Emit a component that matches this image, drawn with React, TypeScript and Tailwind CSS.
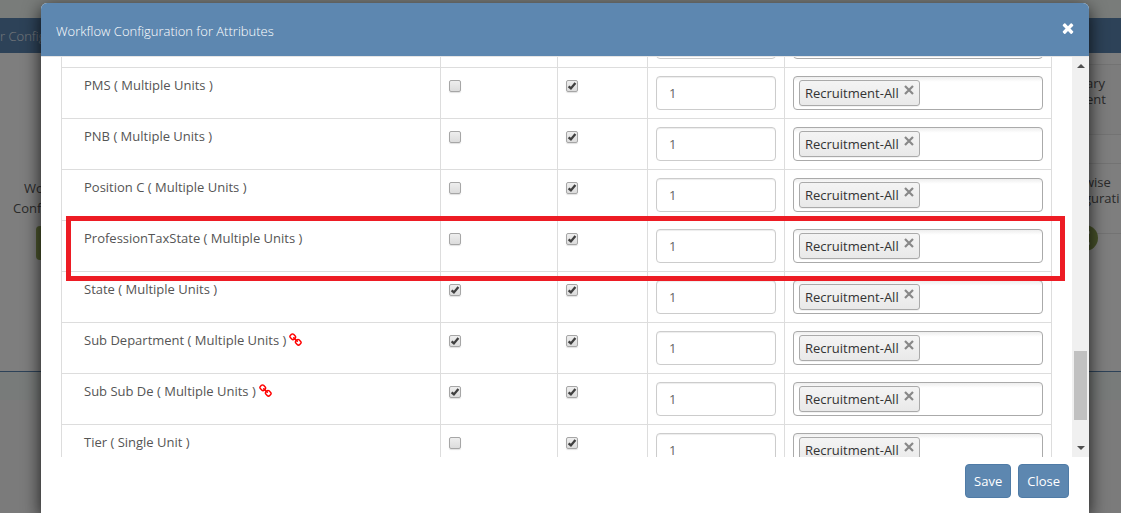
import { useState } from "react";

type Row = { name: string; first: boolean; second: boolean; linked?: boolean };

const rows: Row[] = [
  { name: "", first: false, second: true },
  { name: "PMS ( Multiple Units )", first: false, second: true },
  { name: "PNB ( Multiple Units )", first: false, second: true },
  { name: "Position C ( Multiple Units )", first: false, second: true },
  { name: "ProfessionTaxState ( Multiple Units )", first: false, second: true },
  { name: "State ( Multiple Units )", first: true, second: true },
  { name: "Sub Department ( Multiple Units )", first: true, second: true, linked: true },
  { name: "Sub Sub De ( Multiple Units )", first: true, second: true, linked: true },
  { name: "Tier ( Single Unit )", first: false, second: true },
];

function LinkIcon({ className }: { className: string }) {
  return (
    <svg viewBox="0 0 1792 1792" className={className} fill="currentColor" aria-hidden="true">
      <path d="M1456 1216q0-40-28-68l-208-208q-28-28-68-28-42 0-72 32 3 3 19 18.500t21.500 21.500 15 19 13 25.500 3.500 27.500q0 40-28 68t-68 28q-15 0-27.500-3.500t-25.500-13-19-15-21.500-21.500-18.500-19q-33 31-33 73 0 40 28 68l206 207q27 27 68 27 40 0 68-26l147-146q28-28 28-67zm-703-705q0-40-28-68l-206-207q-28-28-68-28-39 0-68 27l-147 146q-28 28-28 67 0 40 28 68l208 208q27 27 68 27 42 0 72-31-3-3-19-18.500t-21.500-21.500-15-19-13-25.500-3.500-27.500q0-40 28-68t68-28q15 0 27.500 3.500t25.500 13 19 15 21.500 21.500 18.500 19q33-31 33-73zm895 705q0 120-85 203l-147 146q-83 83-203 83-121 0-204-85l-206-207q-83-83-83-203 0-123 88-209l-88-88q-86 88-208 88-120 0-204-84l-208-208q-84-84-84-204t85-203l147-146q83-83 203-83 121 0 204 85l206 207q83 83 83 203 0 123-88 209l88 88q86-88 208-88 120 0 204 84l208 208q84 84 84 204z" />
    </svg>
  );
}

function TimesIcon({ className }: { className: string }) {
  return (
    <svg viewBox="0 0 1792 1792" className={className} fill="currentColor" aria-hidden="true">
      <path d="M1490 1322q0 40-28 68l-136 136q-28 28-68 28t-68-28l-294-294-294 294q-28 28-68 28t-68-28l-136-136q-28-28-28-68t28-68l294-294-294-294q-28-28-28-68t28-68l136-136q28-28 68-28t68 28l294 294 294-294q28-28 68-28t68 28l136 136q28 28 28 68t-28 68l-294 294 294 294q28 28 28 68z" />
    </svg>
  );
}

function Cross({ className }: { className: string }) {
  return (
    <svg viewBox="0 0 10 10" className={className} aria-hidden="true">
      <path d="M1 1 9 9M9 1 1 9" stroke="currentColor" strokeWidth="2.2" />
    </svg>
  );
}

function Tick({ on, label }: { on: boolean; label: string }) {
  const [checked, setChecked] = useState(on);
  return (
    <label className="relative block size-3">
      <input
        type="checkbox"
        aria-label={label}
        checked={checked}
        onChange={(e) => setChecked(e.target.checked)}
        className="block size-3 appearance-none rounded-xs border border-[#a6a6a6] bg-linear-to-b from-[#eeeeee] to-[#dcdcdc] shadow-[0_1px_1px_rgba(0,0,0,0.12)]"
      />
      {checked && (
        <svg viewBox="0 0 12 12" className="pointer-events-none absolute inset-0 size-3" aria-hidden="true">
          <path d="M2.600 6.300 4.900 8.400 9.400 2.900" fill="none" stroke="#404040" strokeWidth="2.300" />
        </svg>
      )}
    </label>
  );
}

function AttributeRow({ row }: { row: Row }) {
  const cell = "border border-[#dddddd] p-2 align-top";
  return (
    <tr>
      <td className={cell}>
        <div className="flex items-center gap-[3px] pl-3.5 leading-[18px]">
          {row.name}
          {row.linked && <LinkIcon className="size-3.5 text-[#ff0000]" />}
        </div>
      </td>
      <td className={cell}>
        <div className="pt-1">
          <Tick on={row.first} label="First option" />
        </div>
      </td>
      <td className={cell}>
        <div className="pt-1">
          <Tick on={row.second} label="Second option" />
        </div>
      </td>
      <td className={cell}>
        <input
          aria-label="Level"
          defaultValue="1"
          className="block h-[34px] w-full rounded border border-[#cccccc] bg-white px-3 text-[13px] text-[#666666] shadow-[inset_0_1px_1px_rgba(0,0,0,0.075)]"
        />
      </td>
      <td className={cell}>
        <div className="flex h-[34px] items-center rounded border border-[#aaaaaa] bg-white bg-linear-to-b from-[#eeeeee] to-white to-15% px-[5px]">
          <span className="flex h-[26px] items-center gap-[5px] rounded-[3px] border border-[#aaaaaa] bg-linear-to-b from-[#f4f4f4] to-[#e9e9e9] px-[5px] text-[#333333] shadow-[0_1px_0_rgba(0,0,0,0.05)]">
            <span className="pt-0.5">Recruitment-All</span>
            <button type="button" aria-label="Remove" className="mb-1.5 text-[#888888]">
              <Cross className="size-2.5" />
            </button>
          </span>
        </div>
      </td>
    </tr>
  );
}

function Backdrop() {
  return (
    <div className="absolute inset-0 flex flex-col bg-[#fdfdfd] text-[13px] text-[#555555]" aria-hidden="true">
      <div className="h-[18px] bg-[#f3f8f5]" />
      <div className="h-[35px] bg-[#5b84b1] font-light text-[#e8eef5]">
        <div className="w-[41px] overflow-hidden leading-9 whitespace-nowrap">r Config</div>
      </div>
      <div className="flex h-[318px] justify-between">
        <div className="flex w-[41px] flex-col overflow-hidden pt-[125px] leading-5">
          <span className="pl-6">Wo</span>
          <span className="pl-[13px]">Conf</span>
          <div className="mt-2 ml-9 h-[34px] rounded-l bg-[#9aad5c]" />
        </div>
        <div className="relative w-[37px] overflow-hidden pt-[11px] leading-4">
          <div className="h-[70px] border-t border-[#e6e6e6] bg-[#f9f9f9] pt-2.5 pl-0.5">
            <div>ary</div>
            <div>ent</div>
          </div>
          <div className="h-[30px] border-y border-[#e6e6e6]" />
          <div className="h-[70px] border-b border-[#e6e6e6] pt-2.5">
            <div>wise</div>
            <div>gurati</div>
          </div>
          <svg viewBox="0 0 26 26" className="absolute top-[172px] -left-3 size-[26px]">
            <circle cx="13" cy="13" r="13" fill="#8fa352" />
            <path d="M13 7.500 18 7.500M15.500 5v5M13 18.500h5M15.500 16v5M12 13h4" stroke="#e6ead8" strokeWidth="2.500" />
          </svg>
        </div>
      </div>
      <div className="h-[29px] border-t border-[#5b84b1] bg-[#f1f7f4]" />
      <div className="flex-1 bg-[#f6f6f6]" />
    </div>
  );
}

export default function App() {
  return (
    <div className="relative min-h-screen overflow-hidden font-['Open_Sans',sans-serif] text-[13px] text-[#555555]">
      <Backdrop />
      <div className="absolute inset-0 bg-black/50" />
      <main className="relative flex min-h-screen flex-col pt-[3px] pr-8 pl-[41px]">
        <section
          role="dialog"
          aria-labelledby="dialog-title"
          className="flex flex-1 flex-col rounded-t-md bg-white shadow-[0_5px_18px_rgba(0,0,0,0.8)]"
        >
          <header className="flex h-[54px] items-center justify-between rounded-t-md border-b border-[#e5e5e5] bg-[#5d87b0] pr-[13px] pl-[15px] text-white">
            <h1 id="dialog-title" className="pt-1 font-light">Workflow Configuration for Attributes</h1>
            <button type="button" aria-label="Dismiss" className="mb-1">
              <TimesIcon className="size-4" />
            </button>
          </header>

          <div className="flex h-[400px] overflow-hidden">
            <div className="relative min-w-0 flex-1 px-5">
              <table className="-mt-[41px] w-full table-fixed border-collapse">
                <colgroup>
                  <col />
                  <col className="w-[117px]" />
                  <col className="w-[90px]" />
                  <col className="w-[137px]" />
                  <col className="w-[267px]" />
                </colgroup>
                <tbody>
                  {rows.map((row) => (
                    <AttributeRow key={row.name} row={row} />
                  ))}
                </tbody>
              </table>
              <div className="pointer-events-none absolute top-[159px] right-[7px] left-[25px] h-[65px] border-[5px] border-[#ed1c24]" />
            </div>
            <div className="flex w-[17px] flex-col items-center bg-[#f0f0f0] py-[7px]" aria-hidden="true">
              <svg viewBox="0 0 8 4" className="h-1 w-2 fill-[#505050]"><path d="M0 4 4 0 8 4Z" /></svg>
              <div className="mt-auto mb-[26px] h-[69px] w-[13px] bg-[#c1c1c1]" />
              <svg viewBox="0 0 8 4" className="h-1 w-2 fill-[#505050]"><path d="M0 0 4 4 8 0Z" /></svg>
            </div>
          </div>

          <footer className="flex justify-end gap-[7px] px-5 pt-[7px]">
            <button type="button" className="h-[34px] rounded border border-[#4f7ba6] bg-[#5d87b0] px-2 pt-0.5 text-[13px] text-white">Save</button>
            <button type="button" className="h-[34px] rounded border border-[#4f7ba6] bg-[#5d87b0] px-2 pt-0.5 text-[13px] text-white">Close</button>
          </footer>
        </section>
      </main>
    </div>
  );
}
